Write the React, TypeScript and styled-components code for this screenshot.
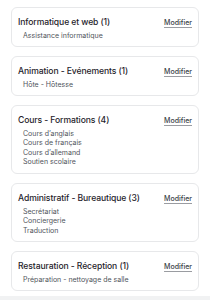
import React from 'react';
import styled, { createGlobalStyle } from 'styled-components';

const GlobalStyle = createGlobalStyle`
  html, body {
    margin: 0;
    padding: 0;
    background: #ffffff;
  }
  body {
    font-family: Inter, 'Noto Sans', 'Liberation Sans', sans-serif;
  }
`;

const categories = [
  { title: 'Informatique et web', items: ['Assistance informatique'] },
  { title: 'Animation - Evénements', items: ['Hôte - Hôtesse'] },
  {
    title: 'Cours - Formations',
    items: ['Cours d’anglais', 'Cours de français', 'Cours d’allemand', 'Soutien scolaire'],
  },
  { title: 'Administratif - Bureautique', items: ['Secrétariat', 'Conciergerie', 'Traduction'] },
  { title: 'Restauration - Réception', items: ['Préparation - nettoyage de salle'] },
];

export default function App() {
  return (
    <Page>
      <GlobalStyle />
      <List>
        {categories.map(c => (
          <Card key={c.title}>
            <CardHeader>
              <Title>
                {c.title} ({c.items.length})
              </Title>
              <EditLink href="#">Modifier</EditLink>
            </CardHeader>
            <Items>
              {c.items.map(i => (
                <Item key={i}>{i}</Item>
              ))}
            </Items>
          </Card>
        ))}
      </List>
      <Footer />
    </Page>
  );
}

const Page = styled.div`
  width: 210px;
  height: 300px;
  display: flex;
  flex-direction: column;
  overflow: hidden;
`;

const List = styled.div`
  display: flex;
  flex-direction: column;
  gap: 9px;
  padding: 7px 11px 0;
  flex: 1;
`;

const Card = styled.div`
  border: 1px solid #e7e8ea;
  border-radius: 6px;
  padding: 7px 6px 6px;
  background: #fff;
`;

const CardHeader = styled.div`
  display: flex;
  align-items: center;
  justify-content: space-between;
  height: 14px;
`;

const Title = styled.div`
  font-size: 8.6px;
  font-weight: 500;
  letter-spacing: -0.1px;
  color: #1f232b;
  white-space: nowrap;
`;

const EditLink = styled.a`
  font-size: 7px;
  font-weight: 500;
  color: #3b3f47;
  text-decoration: underline;
  text-underline-offset: 1.5px;
  text-decoration-color: #9a9ca1;
`;

const Items = styled.div`
  display: flex;
  flex-direction: column;
  padding: 1.5px 0 0 5px;
`;

const Item = styled.div`
  font-size: 7px;
  line-height: 9.6px;
  color: #50545b;
`;

const Footer = styled.div`
  height: 4px;
  background: #f1f2f3;
`;
